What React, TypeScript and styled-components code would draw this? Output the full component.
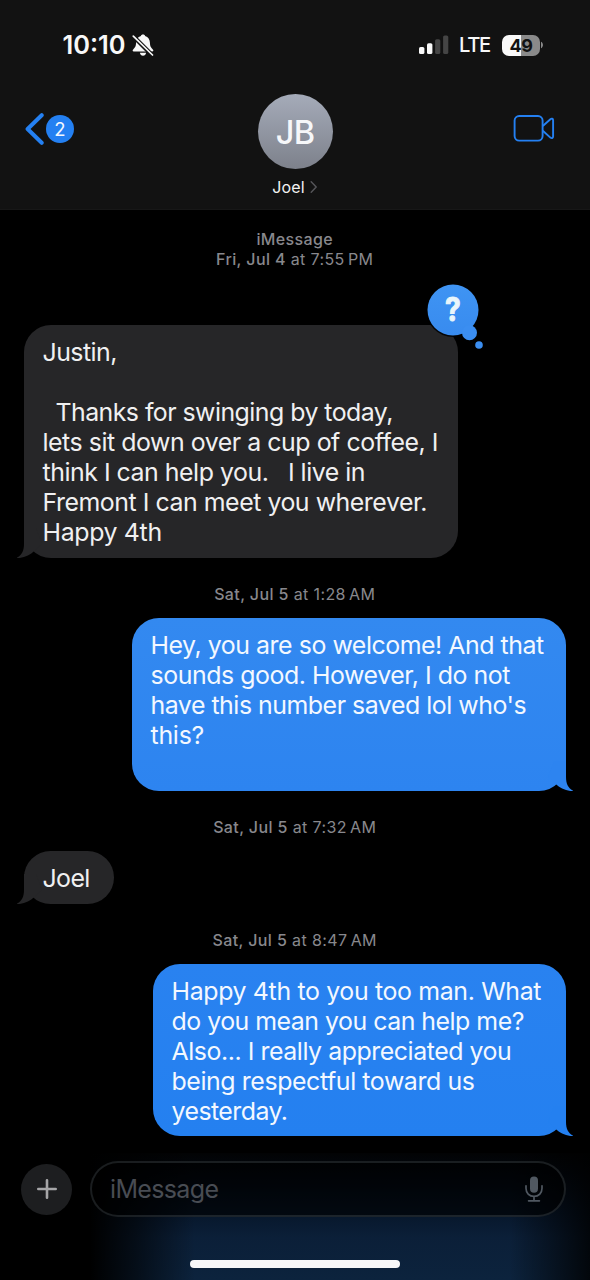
import React from 'react';
import styled, { createGlobalStyle } from 'styled-components';

const GlobalStyle = createGlobalStyle`
  *, *::before, *::after { box-sizing: border-box; }
  body {
    margin: 0;
    background: #000;
    font-family: Inter, "Liberation Sans", sans-serif;
    -webkit-font-smoothing: antialiased;
  }
`;

const Screen = styled.div`
  width: 590px;
  height: 1280px;
  overflow: hidden;
  display: flex;
  flex-direction: column;
  background: #000;
`;

const Header = styled.header`
  flex: none;
  height: 210px;
  background: #121212;
  border-bottom: 1px solid #171717;
`;

const StatusBar = styled.div`
  height: 88px;
  padding: 2px 46px 0 62.5px;
  display: flex;
  align-items: center;
  justify-content: space-between;
  color: #f8f8f8;
`;

const StatusGroup = styled.div`
  display: flex;
  align-items: center;
`;

const Clock = styled.span`
  font-size: 25.4px;
  font-weight: 600;
  line-height: 30px;
  margin-right: 6px;
`;

const Network = styled.span`
  font-size: 20.2px;
  font-weight: 500;
  letter-spacing: -1.3px;
  line-height: 30px;
  margin: 0 12px 0 10.5px;
`;

const Battery = styled.div`
  width: 38px;
  height: 21px;
  border-radius: 7px;
  background: linear-gradient(90deg, #f8f8f8 49%, #8a8a8a 49%);
  color: #121212;
  font-size: 18px;
  font-weight: 700;
  letter-spacing: -0.4px;
  line-height: 21px;
  text-align: center;
`;

const NavBar = styled.nav`
  height: 121px;
  display: grid;
  grid-template-columns: 1fr 120px 1fr;
  align-items: start;
`;

const BackLink = styled.div`
  display: flex;
  align-items: center;
  gap: 2px;
  padding: 25px 0 0 25px;
`;

const UnreadCount = styled.span`
  width: 28px;
  height: 28px;
  border-radius: 50%;
  background: #2480f2;
  color: #f4f8ff;
  font-size: 18.5px;
  line-height: 28px;
  text-align: center;
`;

const Contact = styled.div`
  display: flex;
  flex-direction: column;
  align-items: center;
  padding-top: 6px;
`;

const Avatar = styled.div`
  width: 75px;
  height: 75px;
  border-radius: 50%;
  background: linear-gradient(180deg, #a5abb9, #7d818b);
  color: #f6f7f9;
  font-size: 32.5px;
  font-weight: 550;
  letter-spacing: -0.8px;
  line-height: 78px;
  text-align: center;
`;

const ContactName = styled.div`
  display: flex;
  align-items: center;
  gap: 5px;
  margin-top: 8px;
  color: #f2f2f2;
  font-size: 16px;
  letter-spacing: 0.2px;
  line-height: 20px;
`;

const VideoCall = styled.div`
  display: flex;
  justify-content: flex-end;
  padding: 26px 35.5px 0 0;
`;

const Thread = styled.main`
  flex: none;
  height: 943px;
  padding: 19px 24.5px 0 24px;
  display: flex;
  flex-direction: column;
`;

const Stamp = styled.div<{ $before?: number; $after: number }>`
  margin: ${(p) => p.$before ?? 0}px 0 ${(p) => p.$after}px;
  color: #88888d;
  font-size: 16px;
  letter-spacing: 0.38px;
  line-height: 20px;
  text-align: center;
`;

const StampStrong = styled.span`
  font-weight: 500;
`;

const Bubble = styled.div<{ $mine?: boolean; $fill: string; $width: number; $height: number }>`
  position: relative;
  flex: none;
  align-self: ${(p) => (p.$mine ? 'flex-end' : 'flex-start')};
  width: ${(p) => p.$width}px;
  height: ${(p) => p.$height}px;
  padding: 12px 18px 0 18.5px;
  border-radius: 27px;
  background: ${(p) => p.$fill};
  color: ${(p) => (p.$mine ? '#f3f8ff' : '#f0f0f1')};
`;

const Line = styled.p<{ $track: number }>`
  margin: 0;
  height: 30px;
  font-size: 24.9px;
  line-height: 30px;
  letter-spacing: ${(p) => p.$track}px;
  white-space: pre;
`;

const TailShape = styled.svg<{ $mine?: boolean }>`
  position: absolute;
  bottom: 0;
  ${(p) => (p.$mine ? 'right: -8px; transform: scaleX(-1);' : 'left: -8px;')}
`;

const Tapback = styled.div`
  position: absolute;
  left: 403px;
  top: -41.5px;
  width: 56px;
  height: 66px;
`;

const TapbackShape = styled.svg`
  position: absolute;
  inset: 0;
`;

const TapbackMark = styled.span`
  position: absolute;
  left: 0;
  top: 0;
  width: 52px;
  color: #eaf6fb;
  font-size: 32px;
  font-weight: 650;
  line-height: 52px;
  text-align: center;
  transform: scaleX(0.88);
  -webkit-text-stroke: 1px #eaf6fb;
`;

const Footer = styled.footer`
  flex: 1;
  display: flex;
  flex-direction: column;
  align-items: center;
  background:
    linear-gradient(90deg, #000 90px, rgba(0, 0, 0, 0.6) 135px, rgba(0, 0, 0, 0) 195px, rgba(0, 0, 0, 0) 510px, rgba(0, 0, 0, 0.82) 590px),
    linear-gradient(180deg, #020304 0, #030810 20px, #07172b 60px, #0b1f38 84px, #0c233d 127px);
`;

const Composer = styled.div`
  display: flex;
  align-items: center;
  gap: 18px;
  width: 590px;
  padding: 8px 24px 0 21px;
`;

const PlusButton = styled.div`
  flex: none;
  width: 51px;
  height: 51px;
  border-radius: 50%;
  background: #1d1e20;
  display: flex;
  align-items: center;
  justify-content: center;
`;

const Field = styled.div`
  flex: 1;
  height: 56px;
  padding: 0 21px 0 18px;
  border: 2px solid rgba(110, 120, 130, 0.24);
  border-radius: 28px;
  background: rgba(0, 0, 0, 0.62);
  display: flex;
  align-items: center;
  justify-content: space-between;
`;

const Placeholder = styled.span`
  color: #484c53;
  font-size: 25px;
  letter-spacing: -0.65px;
  line-height: 30px;
`;

const HomeBar = styled.div`
  width: 210px;
  height: 8px;
  margin-top: 43px;
  border-radius: 4px;
  background: #f7f7f9;
`;

type TextLine = [text: string, track: number];

const GREY = '#262628';

function BellOff() {
  return (
    <svg width="22" height="22" viewBox="0 0 22 22">
      <path
        d="M11 0.6C9.8 0.6 9.1 1.2 8.9 2C5.7 3 4.2 5.6 4.1 8.6C4 12.5 3 13.6 1.4 15.2C0.2 16.4 0.5 17.4 1.8 17.4H20.2C21.5 17.4 21.8 16.4 20.6 15.2C19 13.6 18 12.5 17.9 8.6C17.8 5.6 16.3 3 13.1 2C12.9 1.2 12.2 0.6 11 0.6ZM7.9 18.7H14.1C13.8 20.7 12.6 21.7 11 21.7C9.4 21.7 8.2 20.7 7.9 18.7Z"
        fill="#f8f8f8"
      />
      <path d="M-0.5 0.5L21.5 22.5" stroke="#121212" strokeWidth="4.2" />
      <path d="M1.3 2.2L20.5 21" stroke="#f8f8f8" strokeWidth="1.7" strokeLinecap="round" />
    </svg>
  );
}

function Signal() {
  return (
    <svg width="30" height="20" viewBox="0 0 30 20">
      <rect x="0" y="12" width="5.4" height="7" rx="1.6" fill="#f8f8f8" />
      <rect x="8" y="8.2" width="5.4" height="10.8" rx="1.6" fill="#f8f8f8" />
      <rect x="16.1" y="4.2" width="5.2" height="14.8" rx="1.6" fill="#454545" />
      <rect x="24.1" y="0.4" width="5.2" height="18.6" rx="1.6" fill="#454545" />
    </svg>
  );
}

function BatteryTip() {
  return (
    <svg width="4" height="8" viewBox="0 0 4 8">
      <path d="M1 0.8C3.6 1.8 3.6 6.2 1 7.2Z" fill="#8a8a8a" />
    </svg>
  );
}

function Tail({ fill, mine }: { fill: string; mine?: boolean }) {
  return (
    <TailShape $mine={mine} width="32" height="34" viewBox="0 0 32 34">
      <path
        d="M8 4V20C8 26.5 6 31 1.2 33.4C0.8 33.7 1 34 1.5 34C7.4 34 13 31.4 16.8 28.2L26 20L20 4Z"
        fill={fill}
      />
    </TailShape>
  );
}

function Message({
  lines,
  mine,
  fill,
  tail,
  width,
  height,
  children,
}: {
  lines: TextLine[];
  mine?: boolean;
  fill: string;
  tail: string;
  width: number;
  height: number;
  children?: React.ReactNode;
}) {
  return (
    <Bubble $mine={mine} $fill={fill} $width={width} $height={height}>
      <Tail fill={tail} mine={mine} />
      {lines.map(([text, track], i) => (
        <Line key={i} $track={track}>
          {text}
        </Line>
      ))}
      {children}
    </Bubble>
  );
}

function QuestionTapback() {
  return (
    <Tapback>
      <TapbackShape width="56" height="66" viewBox="0 0 56 66">
        <defs>
          <linearGradient id="tapback" x1="0" y1="0" x2="0" y2="1">
            <stop offset="0" stopColor="#3f94f3" />
            <stop offset="1" stopColor="#388bef" />
          </linearGradient>
        </defs>
        <circle cx="26" cy="26" r="27" fill="#000" opacity="0.85" />
        <circle cx="26" cy="26" r="25.5" fill="url(#tapback)" />
        <circle cx="42.5" cy="48.8" r="7.5" fill="#3b8ef1" />
        <circle cx="52" cy="61" r="3.8" fill="#3b8ef1" />
      </TapbackShape>
      <TapbackMark>?</TapbackMark>
    </Tapback>
  );
}

const fromJoel: TextLine[] = [
  ['Justin,', -0.55],
  [' ', 0],
  ['  Thanks for swinging by today,', -0.54],
  ['lets sit down over a cup of coffee, I', -0.46],
  ['think I can help you.   I live in', -0.48],
  ['Fremont I can meet you wherever.', -0.47],
  ['Happy 4th', -0.35],
];

const reply: TextLine[] = [
  ['Hey, you are so welcome! And that', -0.46],
  ['sounds good. However, I do not', -0.45],
  ["have this number saved lol who's", -0.48],
  ['this?', -0.25],
];

const followUp: TextLine[] = [
  ['Happy 4th to you too man. What', -0.35],
  ['do you mean you can help me?', -0.5],
  ['Also... I really appreciated you', -0.45],
  ['being respectful toward us', -0.41],
  ['yesterday.', -0.55],
];

export default function App() {
  return (
    <Screen>
      <GlobalStyle />
      <Header>
        <StatusBar>
          <StatusGroup>
            <Clock>10:10</Clock>
            <BellOff />
          </StatusGroup>
          <StatusGroup>
            <Signal />
            <Network>LTE</Network>
            <Battery>49</Battery>
            <BatteryTip />
          </StatusGroup>
        </StatusBar>
        <NavBar>
          <BackLink>
            <svg width="19" height="32" viewBox="0 0 19 32">
              <path d="M16.7 2.2L2.6 16L16.7 29.8" fill="none" stroke="#2480f2" strokeWidth="4" strokeLinecap="round" strokeLinejoin="round" />
            </svg>
            <UnreadCount>2</UnreadCount>
          </BackLink>
          <Contact>
            <Avatar>JB</Avatar>
            <ContactName>
              Joel
              <svg width="8" height="12" viewBox="0 0 8 12">
                <path d="M1.2 0.8L6.2 6L1.2 11.2" fill="none" stroke="#56565a" strokeWidth="1.4" strokeLinecap="round" strokeLinejoin="round" />
              </svg>
            </ContactName>
          </Contact>
          <VideoCall>
            <svg width="42" height="28" viewBox="0 0 42 28" fill="none" stroke="#2480f2" strokeWidth="1.9" strokeLinejoin="round">
              <rect x="1.6" y="2" width="28" height="24.6" rx="4.6" />
              <path d="M29.8 12L37.4 5.2C38.6 4.2 40.1 4.6 40.1 6.2V22.6C40.1 24.2 38.6 24.6 37.4 23.6L29.8 16.8" />
            </svg>
          </VideoCall>
        </NavBar>
      </Header>

      <Thread>
        <Stamp $after={0}>
          <StampStrong>iMessage</StampStrong>
        </Stamp>
        <Stamp $after={56}>
          <StampStrong>Fri, Jul 4</StampStrong> at 7:55{'\u2009'}PM
        </Stamp>
        <Message lines={fromJoel} fill={GREY} tail={GREY} width={433.5} height={233}>
          <QuestionTapback />
        </Message>

        <Stamp $before={26.4} $after={14}>
          <StampStrong>Sat, Jul 5</StampStrong> at 1:28{'\u2009'}AM
        </Stamp>
        <Message mine lines={reply} fill="linear-gradient(180deg, #3389f0, #2d84f0)" tail="#2d84f0" width={433.5} height={172.6} />

        <Stamp $before={26.4} $after={14}>
          <StampStrong>Sat, Jul 5</StampStrong> at 7:32{'\u2009'}AM
        </Stamp>
        <Message lines={[['Joel', -0.6]]} fill={GREY} tail={GREY} width={90} height={52.5} />

        <Stamp $before={26.4} $after={13.5}>
          <StampStrong>Sat, Jul 5</StampStrong> at 8:47{'\u2009'}AM
        </Stamp>
        <Message mine lines={followUp} fill="linear-gradient(180deg, #2982f0, #2480f0)" tail="#2480f0" width={412.5} height={172.6} />
      </Thread>

      <Footer>
        <Composer>
          <PlusButton>
            <svg width="20" height="20" viewBox="0 0 20 20">
              <path d="M10 1.3V18.7M1.3 10H18.7" stroke="#a6a6a8" strokeWidth="2.6" strokeLinecap="round" />
            </svg>
          </PlusButton>
          <Field>
            <Placeholder>iMessage</Placeholder>
            <svg width="18" height="26" viewBox="0 0 18 26" fill="none">
              <rect x="5" y="0.4" width="8" height="16.4" rx="4" fill="#505861" />
              <path d="M1 9.8V12.2C1 17 4.2 20.4 9 20.4S17 17 17 12.2V9.8M9 20.6V24.6M3.6 24.8H14.4" stroke="#505861" strokeWidth="1.7" strokeLinecap="round" />
            </svg>
          </Field>
        </Composer>
        <HomeBar />
      </Footer>
    </Screen>
  );
}
